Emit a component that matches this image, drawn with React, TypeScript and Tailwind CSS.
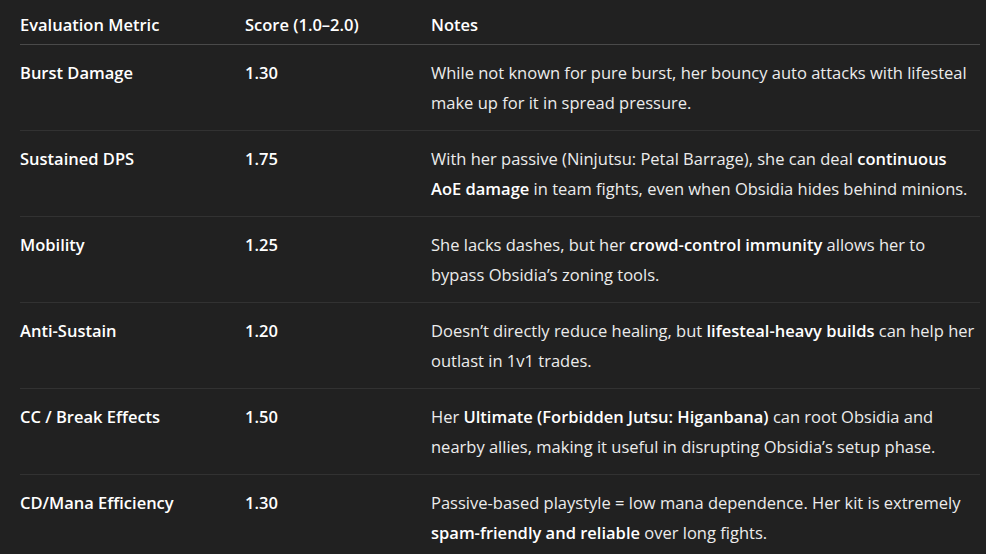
const B = ({ children }: { children: React.ReactNode }) => (
  <strong className="font-semibold text-white">{children}</strong>
);

const rows: { metric: string; score: string; notes: React.ReactNode }[] = [
  {
    metric: "Burst Damage",
    score: "1.30",
    notes: <>While not known for pure burst, her bouncy auto attacks with lifesteal make up for it in spread pressure.</>,
  },
  {
    metric: "Sustained DPS",
    score: "1.75",
    notes: (
      <>
        With her passive (Ninjutsu: Petal Barrage), she can deal <B>continuous AoE damage</B> in team fights, even when Obsidia hides behind minions.
      </>
    ),
  },
  {
    metric: "Mobility",
    score: "1.25",
    notes: (
      <>
        She lacks dashes, but her <B>crowd-control immunity</B> allows her to bypass Obsidia’s zoning tools.
      </>
    ),
  },
  {
    metric: "Anti-Sustain",
    score: "1.20",
    notes: (
      <>
        Doesn’t directly reduce healing, but <B>lifesteal-heavy builds</B> can help her outlast in 1v1 trades.
      </>
    ),
  },
  {
    metric: "CC / Break Effects",
    score: "1.50",
    notes: (
      <>
        Her <B>Ultimate (Forbidden Jutsu: Higanbana)</B> can root Obsidia and nearby allies, making it useful in disrupting Obsidia’s setup phase.
      </>
    ),
  },
  {
    metric: "CD/Mana Efficiency",
    score: "1.30",
    notes: (
      <>
        Passive-based playstyle = low mana dependence. Her kit is extremely <B>spam-friendly and reliable</B> over long fights.
      </>
    ),
  },
];

export default function App() {
  return (
    <div
      className="bg-[#212121] min-h-screen w-full pl-[20px] pr-[6px] text-[16.5px] text-[#ececec] antialiased"
      style={{ fontFamily: '"Open Sans", sans-serif' }}
    >
      <table className="w-[960px] table-fixed border-collapse">
        <colgroup>
          <col className="w-[225px]" />
          <col className="w-[186px]" />
          <col className="w-[549px]" />
        </colgroup>
        <thead>
          <tr className="border-b border-[#4a4a4a]">
            <th className="text-left font-semibold text-white pt-[11px] pb-[5px] leading-[28px]">Evaluation Metric</th>
            <th className="text-left font-semibold text-white pt-[11px] pb-[5px] leading-[28px]">Score (1.0–2.0)</th>
            <th className="text-left font-semibold text-white pt-[11px] pb-[5px] leading-[28px]">Notes</th>
          </tr>
        </thead>
        <tbody>
          {rows.map((r, i) => (
            <tr key={r.metric} className={i < rows.length - 1 ? "border-b border-[#323232]" : ""}>
              <td className="align-top pt-[13px] pb-[12px] leading-[30px] font-semibold text-white">{r.metric}</td>
              <td className="align-top pt-[13px] pb-[12px] leading-[30px] font-semibold text-white">{r.score}</td>
              <td className="align-top pt-[13px] pb-[12px] leading-[30px]">{r.notes}</td>
            </tr>
          ))}
        </tbody>
      </table>
    </div>
  );
}
